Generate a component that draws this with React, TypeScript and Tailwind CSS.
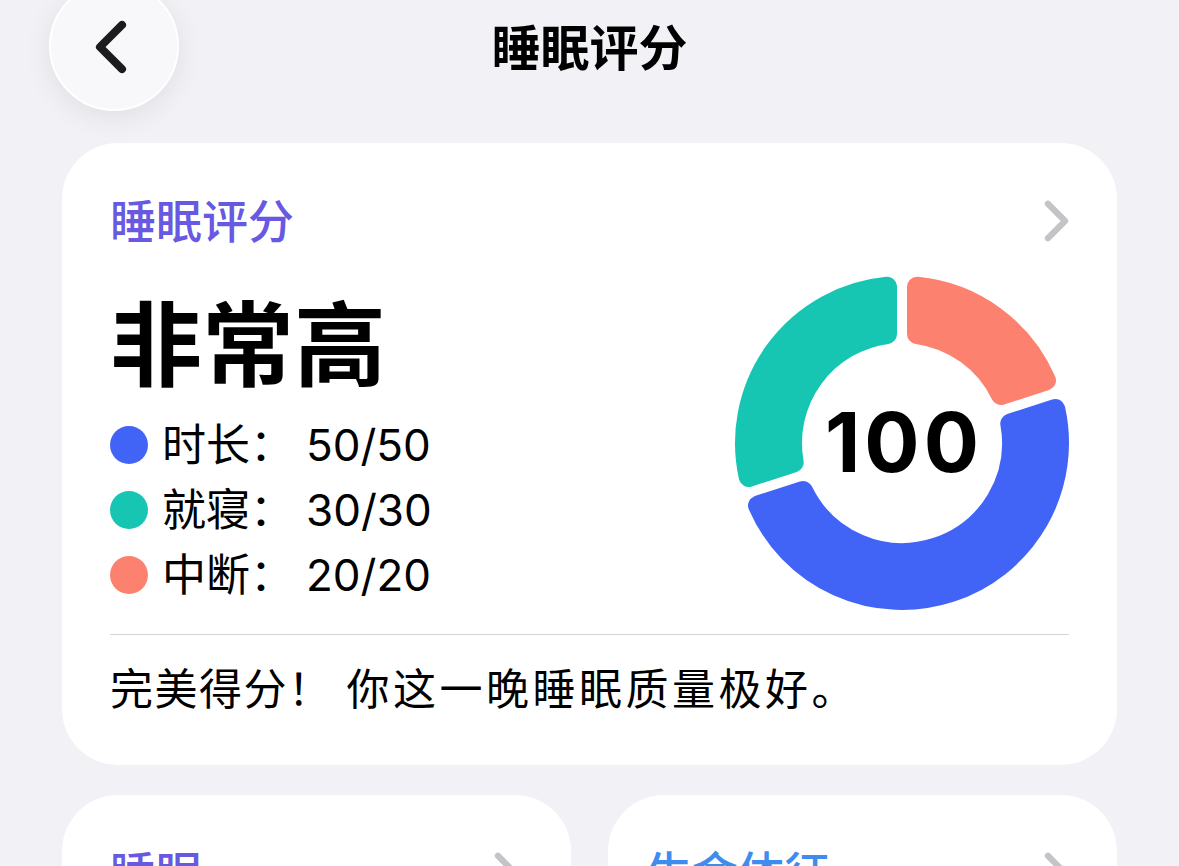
import React from 'react';

type Segment = { color: string; from: number; to: number };

const SEGMENTS: Segment[] = [
  { color: '#fc826f', from: -90, to: -18 },
  { color: '#4164f6', from: -18, to: 162 },
  { color: '#16c6b3', from: 162, to: 270 },
];

const LEGEND = [
  { label: '时长', value: '50/50', color: '#4164f6' },
  { label: '就寝', value: '30/30', color: '#16c6b3' },
  { label: '中断', value: '20/20', color: '#fc826f' },
];

const CX = 170;
const CY = 170;
const R_OUT = 167;
const R_IN = 100;
const CORNER = 10;
const HALF_GAP = 5;

const polar = (r: number, deg: number) => {
  const rad = (deg * Math.PI) / 180;
  return [CX + r * Math.cos(rad), CY + r * Math.sin(rad)];
};

// annular sector shrunk by the corner radius; a round-joined stroke grows it back
const sectorPath = (from: number, to: number) => {
  const ro = R_OUT - CORNER;
  const ri = R_IN + CORNER;
  const off = HALF_GAP + CORNER;
  const dOut = (Math.asin(off / ro) * 180) / Math.PI;
  const dIn = (Math.asin(off / ri) * 180) / Math.PI;
  const [x1, y1] = polar(ro, from + dOut);
  const [x2, y2] = polar(ro, to - dOut);
  const [x3, y3] = polar(ri, to - dIn);
  const [x4, y4] = polar(ri, from + dIn);
  const large = to - from - 2 * dOut > 180 ? 1 : 0;
  return `M${x1} ${y1} A${ro} ${ro} 0 ${large} 1 ${x2} ${y2} L${x3} ${y3} A${ri} ${ri} 0 ${large} 0 ${x4} ${y4} Z`;
};

const Chevron = ({ dir, className }: { dir: 'left' | 'right'; className?: string }) => (
  <svg viewBox="0 0 26 44" className={className} fill="none" stroke="currentColor" strokeWidth={6.5} strokeLinecap="round" strokeLinejoin="round">
    {dir === 'left' ? <path d="M22 4 L4 22 L22 40" /> : <path d="M4 4 L22 22 L4 40" />}
  </svg>
);

const ScoreRing = () => (
  <div className="relative w-[340px] h-[340px] shrink-0 mt-[26px] -mr-[3px]">
    <svg viewBox="0 0 340 340" className="w-full h-full">
      {SEGMENTS.map((s) => (
        <path
          key={s.color}
          d={sectorPath(s.from, s.to)}
          fill={s.color}
          stroke={s.color}
          strokeWidth={CORNER * 2}
          strokeLinejoin="round"
        />
      ))}
    </svg>
    <div className="absolute inset-0 flex items-center justify-center pl-[4px] text-[82px] font-bold text-black leading-none tracking-[4px]">
      100
    </div>
  </div>
);

const SmallCard = ({ title, color, pad }: { title: string; color: string; pad: string }) => (
  <div className={`bg-white rounded-t-[56px] h-[120px] pt-[52px] ${pad}`}>
    <div className="flex items-center justify-between h-[52px]">
      <span className="text-[46px] leading-[52px] font-medium" style={{ color }}>
        {title}
      </span>
      <Chevron dir="right" className="w-[25px] h-[42px] text-[#c4c4c8]" />
    </div>
  </div>
);

export default function App() {
  return (
    <div className="w-[1179px] h-[866px] overflow-hidden bg-[#f1f1f6] text-black font-['Inter','Noto_Sans_CJK_SC',sans-serif]">
      <header className="grid grid-cols-[130px_1fr_130px] items-center px-[49px] -mt-[19px]">
        <button className="w-[130px] h-[130px] rounded-full bg-[#f8f8fa] border-2 border-white shadow-[0_6px_28px_rgba(0,0,0,0.08)] flex items-center justify-center">
          <Chevron dir="left" className="w-[32px] h-[54px] text-[#1c1c1e] mt-[1px] -ml-[6px]" />
        </button>
        <h1 className="text-center text-[49px] font-semibold leading-[56px] pt-[6px]">睡眠评分</h1>
        <div />
      </header>

      <div className="px-[62px] mt-[32px]">
        <section className="bg-white rounded-[56px] pt-[52px] px-[48px] pb-[48px]">
          <div className="flex items-center justify-between h-[52px]">
            <span className="text-[46px] leading-[52px] font-medium text-[#6859e3]">睡眠评分</span>
            <Chevron dir="right" className="w-[25px] h-[42px] text-[#c4c4c8]" />
          </div>

          <div className="flex items-start justify-between">
            <div className="pt-[53px]">
              <div className="text-[92px] leading-[92px] font-bold">非常高</div>
              <div className="mt-[20px] flex flex-col">
                {LEGEND.map((row) => (
                  <div key={row.label} className="flex items-center h-[65px]">
                    <span className="w-[38px] h-[38px] rounded-full shrink-0" style={{ backgroundColor: row.color }} />
                    <span className="ml-[14px] text-[44px] leading-none">
                      {row.label}：<span className="ml-[12px]">{row.value}</span>
                    </span>
                  </div>
                ))}
              </div>
            </div>
            <ScoreRing />
          </div>

          <div className="mt-[21px] h-px bg-[#d3d3d8]" />
          <p className="mt-[26px] text-[43px] leading-[56px] tracking-[1.5px]">
            完美得分！<span className="ml-[14px] tracking-[3.5px]">你这一晚睡眠质量极好。</span>
          </p>
        </section>

        <div className="grid grid-cols-2 gap-[37px] mt-[30px]">
          <SmallCard title="睡眠" color="#6859e3" pad="pl-[48px] pr-[52px]" />
          <SmallCard title="生命体征" color="#3f8cef" pad="pl-[38px] pr-[48px]" />
        </div>
      </div>
    </div>
  );
}
